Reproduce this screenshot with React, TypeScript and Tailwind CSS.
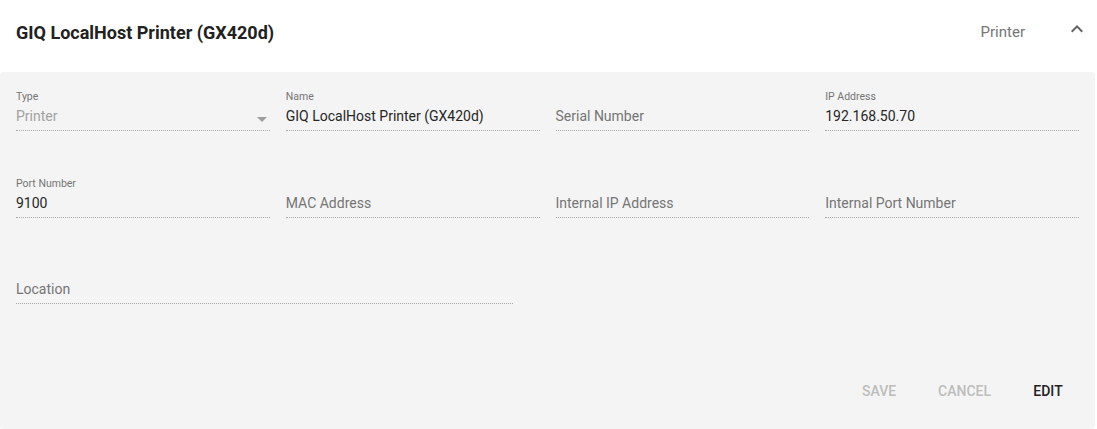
import * as React from "react";

type Field = {
  label: string;
  value?: string;
  disabled?: boolean;
  select?: boolean;
};

const rowOne: Field[] = [
  { label: "Type", value: "Printer", disabled: true, select: true },
  { label: "Name", value: "GIQ LocalHost Printer (GX420d)" },
  { label: "Serial Number" },
  { label: "IP Address", value: "192.168.50.70" },
];

const rowTwo: Field[] = [
  { label: "Port Number", value: "9100" },
  { label: "MAC Address" },
  { label: "Internal IP Address" },
  { label: "Internal Port Number" },
];

function TextField({ field }: { field: Field }) {
  const hasValue = field.value !== undefined;
  return (
    <div className="flex flex-col">
      <div className="h-3 text-[10.5px] leading-[12px] text-[#757575]">
        {hasValue ? field.label : ""}
      </div>
      <div className="relative flex h-[28px] items-start border-b border-dotted border-[#a8a8a8] pt-[4px]">
        <span
          className={
            "text-[14px] leading-[19px] " +
            (!hasValue
              ? "text-[#757575]"
              : field.disabled
                ? "text-[#a2a2a2]"
                : "text-[#262626]")
          }
        >
          {hasValue ? field.value : field.label}
        </span>
        {field.select && (
          <svg
            className="absolute right-[-4px] top-[4px] h-6 w-6"
            viewBox="0 0 24 24"
            fill="#9e9e9e"
          >
            <path d="M7 10l5 5 5-5z" />
          </svg>
        )}
      </div>
    </div>
  );
}

export default function App() {
  return (
    <main
      className="min-h-[429px] w-[1097px] bg-white"
      style={{ fontFamily: "Roboto, 'Noto Sans', sans-serif" }}
    >
      <header className="flex h-[72px] items-start pl-4">
        <h1 className="mt-[21px] text-[18px] font-bold leading-6 text-[#212121]">
          GIQ LocalHost Printer (GX420d)
        </h1>
        <span className="ml-auto mt-[20px] text-[15px] leading-6 text-[#757575]">
          Printer
        </span>
        <svg
          className="ml-[40px] mr-[8px] mt-[17px] h-6 w-6"
          viewBox="0 0 24 24"
          fill="#616161"
        >
          <path d="M12 8l-6 6 1.41 1.41L12 10.83l4.59 4.58L18 14z" />
        </svg>
      </header>

      <section className="w-[1095px] rounded bg-[#f4f4f4] px-4 pt-[19px] pb-[20px]">
        <div className="grid grid-cols-4 gap-x-4">
          {rowOne.map((f) => (
            <TextField key={f.label} field={f} />
          ))}
        </div>
        <div className="mt-[47px] grid grid-cols-4 gap-x-4">
          {rowTwo.map((f) => (
            <TextField key={f.label} field={f} />
          ))}
        </div>
        <div className="mt-[46px] w-[497px]">
          <TextField field={{ label: "Location" }} />
        </div>

        <div className="mt-[69px] flex h-9 items-center justify-end">
          <button className="h-9 min-w-16 px-2 text-[14px] font-medium uppercase text-[#bdbdbd]">
            Save
          </button>
          <button className="ml-[19px] h-9 min-w-16 px-2 text-[14px] font-medium uppercase text-[#bdbdbd]">
            Cancel
          </button>
          <button className="mr-[-1px] ml-[17px] h-9 min-w-16 px-2 text-[14px] font-medium uppercase text-[#212121]">
            Edit
          </button>
        </div>
      </section>
    </main>
  );
}
